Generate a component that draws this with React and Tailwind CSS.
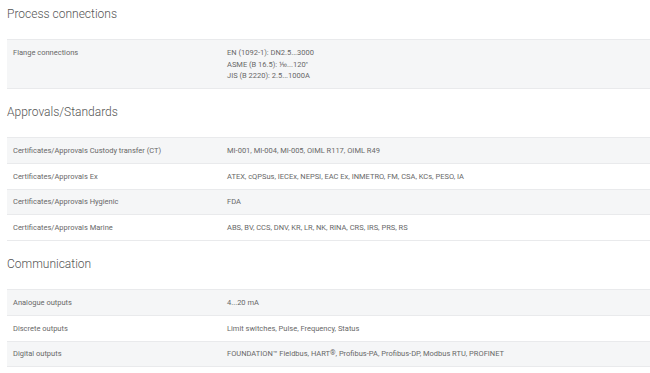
import React from "react";

const sections = [
  {
    title: "Process connections",
    rows: [
      {
        label: "Flange connections",
        value: [
          "EN (1092-1): DN2.5...3000",
          "ASME (B 16.5): ⅒...120\"",
          "JIS (B 2220): 2.5...1000A",
        ],
      },
    ],
  },
  {
    title: "Approvals/Standards",
    rows: [
      { label: "Certificates/Approvals Custody transfer (CT)", value: "MI-001, MI-004, MI-005, OIML R117, OIML R49" },
      { label: "Certificates/Approvals Ex", value: "ATEX, cQPSus, IECEx, NEPSI, EAC Ex, INMETRO, FM, CSA, KCs, PESO, IA" },
      { label: "Certificates/Approvals Hygienic", value: "FDA" },
      { label: "Certificates/Approvals Marine", value: "ABS, BV, CCS, DNV, KR, LR, NK, RINA, CRS, IRS, PRS, RS" },
    ],
  },
  {
    title: "Communication",
    rows: [
      { label: "Analogue outputs", value: "4...20 mA" },
      { label: "Discrete outputs", value: "Limit switches, Pulse, Frequency, Status" },
      {
        label: "Digital outputs",
        value: (
          <>
            FOUNDATION™ Fieldbus, HART<sup className="text-[7px] relative -top-[1px]">®</sup>, Profibus-PA, Profibus-DP, Modbus RTU, PROFINET
          </>
        ),
      },
    ],
  },
];

export default function App() {
  return (
    <div
      className="w-[650px] h-[373px] overflow-hidden bg-white pl-[7px] pt-[2px]"
      style={{ fontFamily: "Roboto, 'Liberation Sans', sans-serif" }}
    >
      {sections.map((s, si) => (
        <div key={si} className={si > 0 ? "mt-[11px]" : ""}>
          <h2 className="h-[24px] leading-[24px] text-[12px] font-light text-[#555555]">
            {s.title}
          </h2>
          <div className="mt-[13px] border-b border-[#e9eaec]">
            {s.rows.map((r, ri) => {
              const multi = Array.isArray(r.value);
              return (
                <div
                  key={ri}
                  className={`flex border-t border-[#e9eaec] text-[7.5px] text-[#686868] ${
                    ri % 2 === 0 ? "bg-[#f5f6f7]" : "bg-white"
                  } ${multi ? "py-[7px] leading-[11.5px] h-[49px]" : "h-[25.75px] items-center leading-[11px]"}`}
                >
                  <div className="w-[214px] shrink-0 pl-[6px]">{r.label}</div>
                  <div className="flex-1 pl-[6px]">
                    {multi ? r.value.map((v, vi) => <div key={vi}>{v}</div>) : r.value}
                  </div>
                </div>
              );
            })}
          </div>
        </div>
      ))}
    </div>
  );
}
